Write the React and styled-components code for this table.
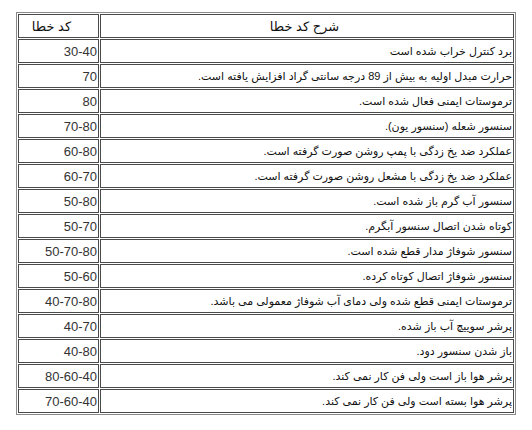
import React from "react";
import styled, { createGlobalStyle } from "styled-components";

const GlobalStyle = createGlobalStyle`
  html, body {
    margin: 0;
    padding: 0;
    background: #fff;
  }
  body {
    font-family: Tahoma, "Liberation Sans", "DejaVu Sans", sans-serif;
  }
`;

const Page = styled.div`
  padding: 12px 0 0 16px;
`;

const ErrorTable = styled.table`
  direction: rtl;
  width: 500px;
  border: 1px solid #8a8a8a;
  border-collapse: separate;
  border-spacing: 1px;
  font-size: 13px;
  color: #222;
`;

const HeadCell = styled.td`
  box-sizing: border-box;
  height: 24px;
  border: 1px solid #4a4a4a;
  padding: 0 1px;
  text-align: center;
  vertical-align: middle;
  font-weight: normal;
  color: #111;
  ${(p) => (p.$code ? "width: 81px; padding-right: 15px;" : "padding-right: 6px;")}
`;

const DescCell = styled.td`
  box-sizing: border-box;
  height: 24px;
  border: 1px solid #4a4a4a;
  padding: 0 1px;
  text-align: right;
  vertical-align: middle;
  font-size: 11px;
  color: #111;
  white-space: nowrap;
`;

const CodeCell = styled.td`
  box-sizing: border-box;
  width: 81px;
  height: 24px;
  border: 1px solid #4a4a4a;
  padding: 0 1px;
  direction: ltr;
  text-align: right;
  vertical-align: middle;
  font-family: "Liberation Sans", Arial, sans-serif;
  color: #333;
`;

const rows = [
  ["برد کنترل خراب شده است", "30-40"],
  ["حرارت مبدل اولیه به بیش از 89 درجه سانتی گراد افزایش یافته است.", "70"],
  ["ترموستات ایمنی فعال شده است.", "80"],
  ["سنسور شعله (سنسور یون).", "70-80"],
  ["عملکرد ضد یخ زدگی با پمپ روشن صورت گرفته است.", "60-80"],
  ["عملکرد ضد یخ زدگی با مشعل روشن صورت گرفته است.", "60-70"],
  ["سنسور آب گرم باز شده است.", "50-80"],
  ["کوتاه شدن اتصال سنسور آبگرم.", "50-70"],
  ["سنسور شوفاژ مدار قطع شده است.", "50-70-80"],
  ["سنسور شوفاژ  اتصال کوتاه کرده.", "50-60"],
  ["ترموستات ایمنی قطع شده ولی دمای آب شوفاژ معمولی می باشد.", "40-70-80"],
  ["پرشر سوییچ آب باز شده.", "40-70"],
  ["باز شدن سنسور دود.", "40-80"],
  ["پرشر هوا باز است ولی فن کار نمی کند.", "80-60-40"],
  ["پرشر هوا بسته است ولی فن کار نمی کند.", "70-60-40"],
];

export default function App() {
  return (
    <Page>
      <GlobalStyle />
      <ErrorTable>
        <tbody>
          <tr>
            <HeadCell>شرح کد خطا</HeadCell>
            <HeadCell $code>کد خطا</HeadCell>
          </tr>
          {rows.map(([desc, code]) => (
            <tr key={code + desc}>
              <DescCell>{desc}</DescCell>
              <CodeCell>{code}</CodeCell>
            </tr>
          ))}
        </tbody>
      </ErrorTable>
    </Page>
  );
}
